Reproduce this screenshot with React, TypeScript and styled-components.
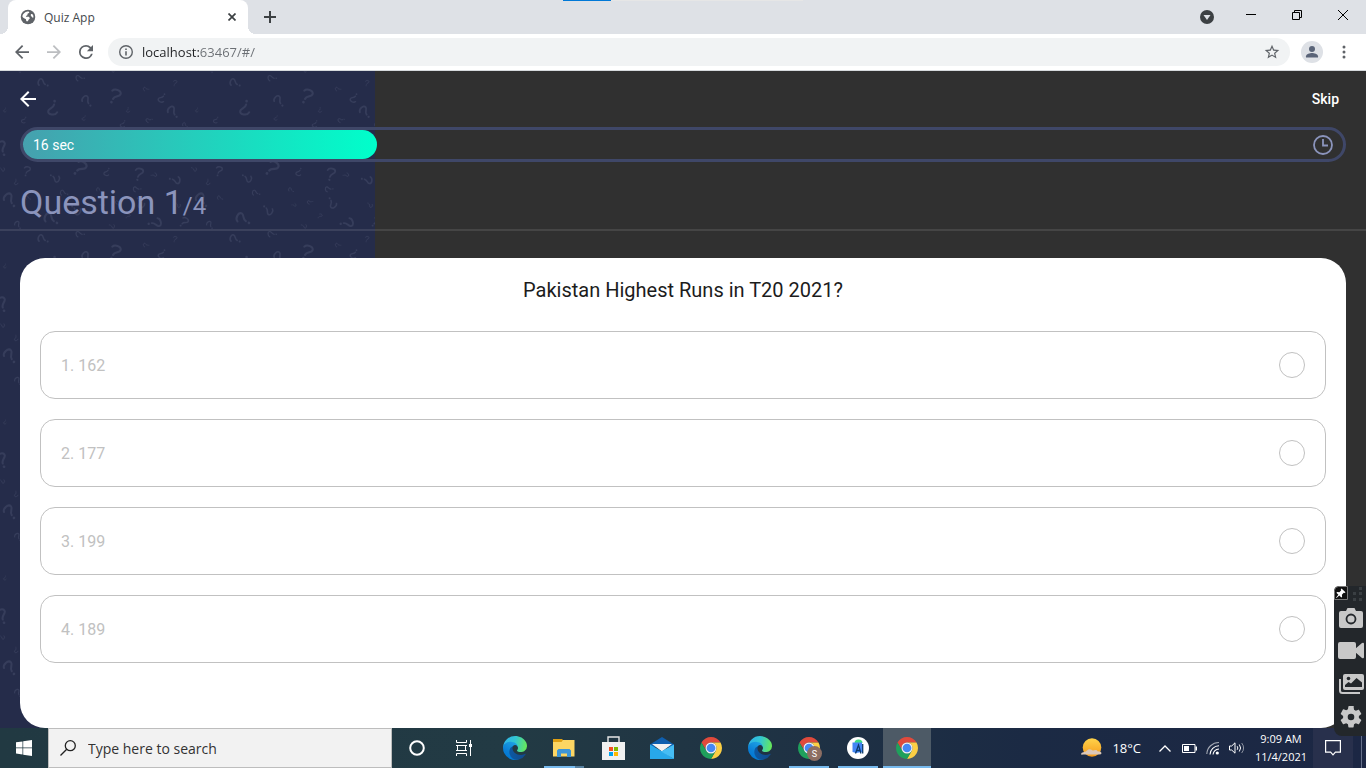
import React, { useState } from 'react';
import styled, { createGlobalStyle } from 'styled-components';

const UI = '"Open Sans", "Noto Sans", sans-serif';
const APP = 'Roboto, "Liberation Sans", sans-serif';

const GlobalStyle = createGlobalStyle`
  *, *::before, *::after { box-sizing: border-box; }
  body { margin: 0; font-family: ${APP}; overflow: hidden; }
  button, input { font: inherit; color: inherit; border: 0; padding: 0; margin: 0; background: none; outline: none; }
  svg { display: block; flex: none; }
`;

const Desktop = styled.div`
  position: relative;
  display: flex;
  flex-direction: column;
  width: 100%;
  min-height: 100vh;
`;

/* ---------- browser window ---------- */

const TitleBar = styled.header`
  position: relative;
  display: flex;
  align-items: stretch;
  height: 34px;
  padding-left: 8px;
  background: #dee1e6;
  font-family: ${UI};
`;

const LoadStrip = styled.div`
  position: absolute;
  top: 0;
  left: calc(50% - 120px);
  width: 240px;
  height: 1px;
  background: linear-gradient(90deg, #0078d7 48px, #e6e6e6 48px);
`;

const Tab = styled.div`
  position: relative;
  display: flex;
  align-items: center;
  width: 240px;
  padding: 0 10px 0 12px;
  gap: 8px;
  border-radius: 8px 8px 0 0;
  background: #fff;
  color: #45494d;
  font-size: 12px;

  &::before, &::after {
    content: '';
    position: absolute;
    bottom: 0;
    width: 8px;
    height: 8px;
  }
  &::before { left: -8px; background: radial-gradient(circle at 0 0, #dee1e6 8px, #fff 8px); }
  &::after { right: -8px; background: radial-gradient(circle at 100% 0, #dee1e6 8px, #fff 8px); }
`;

const TabTitle = styled.span`
  flex: 1;
`;

const IconButton = styled.button<{ $w?: number }>`
  display: flex;
  align-items: center;
  justify-content: center;
  width: ${(p) => p.$w ?? 32}px;
  flex: none;
`;

const WindowControls = styled.div`
  display: flex;
  margin-left: auto;
  height: 30px;
`;

const Toolbar = styled.div`
  display: flex;
  align-items: center;
  height: 37px;
  padding: 0 6px;
  background: #fff;
  border-bottom: 1px solid #d5d9dc;
  font-family: ${UI};
`;

const AddressBar = styled.div`
  display: flex;
  align-items: center;
  flex: 1;
  height: 28px;
  margin: 0 6px;
  padding: 0 2px 0 10px;
  gap: 8px;
  border-radius: 14px;
  background: #f1f3f4;
`;

const AddressInput = styled.input`
  flex: 1;
  min-width: 0;
  font-size: 13px;
  background: linear-gradient(90deg, #202124 57px, #6b6f74 57px);
  background-clip: text;
  color: transparent;
`;

const Avatar = styled.span`
  display: flex;
  width: 22px;
  height: 22px;
  border-radius: 50%;
  background: #dee1e6;
  overflow: hidden;
`;

/* ---------- quiz page ---------- */

const QuizPage = styled.main`
  position: relative;
  display: flex;
  flex-direction: column;
  flex: 1;
  background: #303030;
  color: #fff;
`;

const Backdrop = styled.div`
  position: absolute;
  inset: 0 auto 0 0;
  width: 375px;
  background: #252c4a;
  overflow: hidden;
`;

const Content = styled.div`
  position: relative;
  display: flex;
  flex-direction: column;
  flex: 1;
`;

const AppBar = styled.div`
  display: flex;
  align-items: center;
  justify-content: space-between;
  height: 56px;
  padding: 0 27px 0 16px;
`;

const SkipButton = styled.button`
  font-size: 14px;
  font-weight: 500;
`;

const Timer = styled.div`
  display: flex;
  align-items: center;
  justify-content: space-between;
  height: 35px;
  margin: 0 20px;
  padding-right: 10px;
  border: 3px solid #3f4768;
  border-radius: 50px;
`;

const TimerFill = styled.div`
  display: flex;
  align-items: center;
  height: 29px;
  padding-left: 10px;
  border-radius: 50px;
  background: linear-gradient(90deg, #46a0ae, #00ffcb);
  font-size: 14px;
`;

const QuestionCount = styled.h1`
  margin: 20px 20px 7px;
  font-size: 34px;
  font-weight: 400;
  line-height: 40px;
  color: #8b94bc;

  small { font-size: 24px; line-height: 24px; }
`;

const Divider = styled.hr`
  width: 100%;
  height: 2px;
  margin: 0 0 27px;
  border: 0;
  background: rgba(255, 255, 255, 0.1);
`;

const Card = styled.form`
  display: flex;
  flex-direction: column;
  flex: 1;
  gap: 20px;
  margin: 0 20px;
  padding: 20px;
  border-radius: 25px;
  background: #fff;
`;

const QuestionText = styled.h2`
  margin: 0 0 9px;
  text-align: center;
  font-size: 20px;
  font-weight: 400;
  line-height: 24px;
  color: #1c1c1c;
`;

const Option = styled.label`
  display: flex;
  align-items: center;
  justify-content: space-between;
  height: 68px;
  padding: 0 20px;
  border: 1px solid #c1c1c1;
  border-radius: 15px;
  font-size: 16px;
  color: #c1c1c1;
`;

const Radio = styled.input`
  appearance: none;
  width: 26px;
  height: 26px;
  border: 1px solid #c1c1c1;
  border-radius: 50%;
  &:checked { background: #6ac259; }
`;

/* ---------- task bar ---------- */

const TaskBar = styled.footer`
  display: flex;
  height: 40px;
  background: linear-gradient(90deg, #213942 0%, #223a44 38%, #1e3044 62%, #1b2a44 75%, #1c2744 100%);
  color: #fff;
  font-family: ${UI};
`;

const SearchBox = styled.label`
  display: flex;
  align-items: center;
  width: 344px;
  padding-left: 11px;
  gap: 12px;
  border: 1px solid #bdbdbd;
  background: #f2f2f2;
`;

const SearchInput = styled.input`
  flex: 1;
  min-width: 0;
  font-size: 14px;
  color: #333;
  &::placeholder { color: #333; opacity: 1; }
`;

const Apps = styled.nav`
  display: flex;
  gap: 1px;
  padding-left: 1px;
`;

const AppButton = styled.button<{ $state?: 'open' | 'stacked' | 'active' }>`
  position: relative;
  display: flex;
  align-items: center;
  justify-content: center;
  width: 48px;
  background: ${(p) => (p.$state === 'active' ? '#4d5a66' : 'none')};

  &::after {
    content: '';
    display: ${(p) => (p.$state ? 'block' : 'none')};
    position: absolute;
    bottom: 0;
    left: ${(p) => (p.$state === 'active' ? 0 : 4)}px;
    right: ${(p) => (p.$state === 'active' ? 0 : 4)}px;
    height: 2px;
    background: ${(p) => (p.$state === 'stacked' ? 'linear-gradient(90deg, #76b9ed 31px, #56809f 31px)' : '#76b9ed')};
  }
`;

const Tray = styled.div`
  display: flex;
  align-items: center;
  margin-left: auto;
`;

const Weather = styled.button`
  display: flex;
  align-items: center;
  gap: 10px;
  margin-right: 12px;
  font-size: 13px;
`;

const Clock = styled.time`
  width: 64px;
  text-align: center;
  font-size: 11px;
  line-height: 18px;
`;

const Notifications = styled.button`
  display: flex;
  align-items: center;
  justify-content: center;
  align-self: stretch;
  width: 40px;
  margin-right: 8px;
  background: #28304c;
`;

const ShowDesktop = styled.button`
  align-self: stretch;
  width: 5px;
  border-left: 1px solid #66708a;
`;

/* ---------- floating capture tools ---------- */

const CaptureBar = styled.aside`
  position: absolute;
  right: 0;
  bottom: 32px;
  display: flex;
  flex-direction: column;
  width: 32px;
  height: 150px;
  border-radius: 6px 0 0 8px;
  background: #23272b;
`;

const PinRow = styled.div`
  display: flex;
  align-items: flex-start;
  gap: 5px;
  height: 15px;
`;

const ToolButton = styled.button`
  display: flex;
  align-items: center;
  justify-content: center;
  height: 33px;
  padding-left: 2px;
`;

/* ---------- drawings ---------- */

const TILE_W = 192;
const TILE_H = 156;

// x, y, scale, rotation of every question mark in one tile
const MARKS: number[][] = [
  [43, 12, 0.75, -70], [80, 7, 0.6, -95], [175, 12, 0.4, 10], [146, 18, 0.4, -95],
  [115, 25, 1.0, 22], [87, 30, 0.8, -45], [162, 27, 0.65, 205], [53, 37, 1.0, 185],
  [5, 39, 0.3, 190], [128, 39, 0.35, 175], [173, 41, 0.85, -45], [84, 47, 0.35, 200],
  [24, 49, 0.45, 205], [149, 49, 0.45, 250], [123, 53, 0.5, 200], [185, 54, 0.4, -60],
  [2, 77, 1.0, -25], [2, 98, 0.4, 110], [27, 100, 0.65, 10], [16, 111, 0.4, 170],
  [55, 107, 0.7, 115], [80, 97, 1.05, 35], [107, 101, 0.55, 200], [139, 103, 0.85, 8],
  [154, 104, 0.4, 75], [175, 109, 0.75, 95], [64, 122, 0.55, -80], [99, 119, 0.4, -65],
  [137, 118, 0.55, -100], [10, 129, 1.0, -42], [28, 127, 0.4, -75], [76, 139, 0.75, 125],
  [102, 134, 0.3, 85], [118, 131, 0.4, -110], [140, 132, 0.75, 145], [178, 134, 0.4, 125],
  [128, 145, 0.35, 40], [51, 148, 1.0, -65], [18, 154, 0.55, -40], [112, 155, 0.4, 105],
  [155, 152, 0.9, 75], [184, 151, 0.7, 35],
];

const WRAPS = [-1, 0, 1].flatMap((cx) => [-1, 0, 1].map((cy) => [cx, cy]));

const MarkPattern = () => (
  <svg width="100%" height="100%" aria-hidden="true">
    <defs>
      <g id="mark">
        <path d="M-4.500 -4C-3 -7.500 4.500 -7.500 4.500 -3.500C4.500 -.5 -.5 -.5 -.8 3.500" fill="none" stroke="#363d5b" strokeWidth="2" strokeLinecap="round" />
        <circle cx="-1" cy="7" r="1.300" fill="#363d5b" />
      </g>
      <pattern id="marks" width={TILE_W} height={TILE_H} patternUnits="userSpaceOnUse">
        {WRAPS.map(([cx, cy]) => (
          <g key={`${cx}${cy}`} transform={`translate(${cx * TILE_W} ${cy * TILE_H})`}>
            {MARKS.map(([x, y, s, r], i) => (
              <use key={i} href="#mark" transform={`translate(${x} ${y}) rotate(${r}) scale(${s})`} />
            ))}
          </g>
        ))}
      </pattern>
    </defs>
    <rect width="100%" height="100%" fill="url(#marks)" />
  </svg>
);

const ArrowIcon = ({ color, size = 16, flip }: { color: string; size?: number; flip?: boolean }) => (
  <svg width={size} height={size} viewBox="4 4 16 16" fill={color}>
    <path transform={flip ? 'rotate(180 12 12)' : undefined} d="M20 11H7.830l5.590-5.590L12 4l-8 8 8 8 1.410-1.410L7.830 13H20v-2z" />
  </svg>
);

const ChromeIcon = ({ badge }: { badge?: string }) => (
  <svg width="26" height="26" viewBox="0 0 26 26">
    <g transform="translate(2 2) scale(.4583)">
      <path fill="#e04a3c" d="M3.220 12A24 24 0 0 1 44.780 12H24A12 12 0 0 0 13.600 30Z" />
      <path fill="#fccf44" d="M44.780 12A24 24 0 0 1 24 48L34.390 30A12 12 0 0 0 24 12Z" />
      <path fill="#1fa05c" d="M24 48A24 24 0 0 1 3.220 12L13.600 30A12 12 0 0 0 34.390 30Z" />
      <circle cx="24" cy="24" r="12" fill="#f3f3f3" />
      <circle cx="24" cy="24" r="9.500" fill="#4688f4" />
    </g>
    {badge && (
      <>
        <circle cx="18.500" cy="18.500" r="7.500" fill="#8d6e63" />
        <text x="18.500" y="22" fontSize="9" fontFamily={APP} textAnchor="middle" fill="#fff">{badge}</text>
      </>
    )}
  </svg>
);

const EdgeIcon = () => (
  <svg width="24" height="24" viewBox="0 0 256 256">
    <defs>
      <linearGradient id="edgeA" x1="60" y1="177" x2="240" y2="177" gradientUnits="userSpaceOnUse">
        <stop offset="0" stopColor="#0c59a4" /><stop offset="1" stopColor="#114a8b" />
      </linearGradient>
      <linearGradient id="edgeB" x1="130" y1="90" x2="40" y2="235" gradientUnits="userSpaceOnUse">
        <stop offset="0" stopColor="#1b9de2" /><stop offset=".6" stopColor="#0b7fd6" /><stop offset="1" stopColor="#0078d4" />
      </linearGradient>
      <linearGradient id="edgeC" x1="20" y1="60" x2="250" y2="110" gradientUnits="userSpaceOnUse">
        <stop offset="0" stopColor="#2fb5e6" /><stop offset=".45" stopColor="#32c6d2" /><stop offset="1" stopColor="#66e85a" />
      </linearGradient>
    </defs>
    <path fill="url(#edgeA)" d="M235.680 190.500a93.730 93.730 0 0 1-10.540 4.710 101.870 101.870 0 0 1-35.900 6.460c-47.320 0-88.540-32.550-88.540-74.320a31.480 31.480 0 0 1 16.430-27.280c-42.800 1.800-53.800 46.400-53.800 72.530 0 73.880 68.090 81.370 82.760 81.370 7.910 0 19.840-2.300 27-4.560l1.310-.44a128.340 128.340 0 0 0 66.600-52.800 4 4 0 0 0-5.320-5.670z" />
    <path fill="url(#edgeB)" d="M105.730 241.420A79.200 79.200 0 0 1 83 220.080a80.720 80.720 0 0 1 29.530-120c3.120-1.470 8.450-4.130 15.540-4a32.350 32.350 0 0 1 25.690 13 31.880 31.880 0 0 1 6.360 18.660c0-.21 24.460-79.600-80-79.600-43.900 0-80 41.660-80 78.210a130.150 130.150 0 0 0 12.110 56 128 128 0 0 0 156.380 67.110 75.550 75.550 0 0 1-62.780-8z" />
    <path fill="url(#edgeC)" d="M152.330 148.860c-.81 1-3.300 2.500-3.300 5.660 0 2.610 1.700 5.120 4.720 7.230 14.380 10 41.490 8.680 41.560 8.680a59.560 59.560 0 0 0 30.270-8.350A61.380 61.380 0 0 0 256 109.180c.26-22.410-8-37.310-11.340-43.910C223.460 23.840 177.720 0 128 0A128 128 0 0 0 0 126.200c.48-36.540 36.800-66.050 80-66.050 3.500 0 23.460.34 42 10.070 16.340 8.580 24.900 18.940 30.850 29.210 6.180 10.670 7.280 24.150 7.280 29.520s-2.740 13.330-7.800 19.910z" />
  </svg>
);

const ANSWERS = ['162', '177', '199', '189'];

export default function App() {
  const [choice, setChoice] = useState<string | null>(null);
  const [url, setUrl] = useState('localhost:63467/#/');
  const elapsed = 16 / 60;

  return (
    <Desktop>
      <GlobalStyle />
      <TitleBar>
        <LoadStrip />
        <Tab>
          <svg width="16" height="16" viewBox="1 1 22 22">
            <circle cx="12" cy="12" r="10" fill="#5f6368" />
            <path fill="#fff" d="M4.200 11C4.800 8 7.500 5 11.500 4.500c1.500 0 2.500.6 2.200 1.600-.3.900-2 .7-2.400 1.800-.2 1 .5 1.500-.8 2-1 .4-1.500.8-1.300 1.700h3.200c1.200 0 1.800 1 2 2 .2 1.100-1.200 1.300-1.700 2.100-.4.800-.4 2.300-1.800 2.300-1.500 0-1.500-1.800-1.700-3C8 14.600 5 13.500 4.200 11zM16.500 8c1-.3 2 .2 2.500 1.200.5 1.100.6 2.600.2 3.800-1.200 0-1.500-1.200-2.400-1.800-1.200-.8-1.500-2.400-.3-3.200z" />
          </svg>
          <TabTitle>Quiz App</TabTitle>
          <IconButton $w={12} aria-label="Close tab">
            <svg width="8" height="8" viewBox="0 0 8 8" stroke="#3c4043" strokeWidth="1.700"><path d="M.5.5l7 7M7.500.5l-7 7" /></svg>
          </IconButton>
        </Tab>
        <IconButton $w={44} aria-label="New tab">
          <svg width="12" height="12" viewBox="0 0 12 12" stroke="#3c4043" strokeWidth="2"><path d="M6 0v12M0 6h12" /></svg>
        </IconButton>
        <WindowControls>
          <IconButton $w={42} aria-label="Search tabs">
            <svg width="14" height="26" viewBox="0 -8 14 26"><circle cx="7" cy="7" r="7" fill="#3c4043" /><path d="M3.500 5h7L7 10z" fill="#dee1e6" /></svg>
          </IconButton>
          <IconButton $w={46} aria-label="Minimize">
            <svg width="10" height="10" viewBox="0 0 10 10" stroke="#000"><path d="M0 4.500h10" /></svg>
          </IconButton>
          <IconButton $w={46} aria-label="Restore">
            <svg width="10" height="10" viewBox="0 0 10 10" fill="none" stroke="#000"><path d="M.5 2.500h7v7h-7zM2.500 2.500v-2h7v7h-2" /></svg>
          </IconButton>
          <IconButton $w={46} aria-label="Close">
            <svg width="10" height="10" viewBox="0 0 10 10" stroke="#000"><path d="M0 0l10 10M10 0L0 10" /></svg>
          </IconButton>
        </WindowControls>
      </TitleBar>

      <Toolbar>
        <IconButton aria-label="Back"><ArrowIcon color="#5f6368" size={14} /></IconButton>
        <IconButton aria-label="Forward"><ArrowIcon color="#bcbec1" size={14} flip /></IconButton>
        <IconButton aria-label="Reload">
          <svg width="14" height="14" viewBox="4 4 16 16" fill="#5f6368"><path d="M17.650 6.350A7.958 7.958 0 0 0 12 4a8 8 0 1 0 7.730 10h-2.080A6 6 0 1 1 12 6c1.660 0 3.140.69 4.220 1.780L13 11h7V4l-2.350 2.350z" /></svg>
        </IconButton>
        <AddressBar>
          <svg width="16" height="16" viewBox="0 0 16 16" fill="#5f6368"><path d="M8 1a7 7 0 1 0 0 14A7 7 0 0 0 8 1zm0 12.600A5.600 5.600 0 1 1 8 2.400a5.600 5.600 0 0 1 0 11.200zM7.200 7.300h1.600v4.200H7.200zM7.200 4.500h1.600V6H7.200z" /></svg>
          <AddressInput aria-label="Address" value={url} onChange={(e) => setUrl(e.target.value)} />
          <IconButton aria-label="Bookmark">
            <svg width="16" height="16" viewBox="1 1 22 22" fill="#5f6368"><path d="M22 9.240l-7.190-.62L12 2 9.190 8.630 2 9.240l5.460 4.730L5.820 21 12 17.270 18.180 21l-1.630-7.030L22 9.240zM12 15.400l-3.760 2.270 1-4.280-3.320-2.880 4.380-.38L12 6.100l1.710 4.040 4.380.38-3.320 2.880 1 4.280L12 15.400z" /></svg>
          </IconButton>
        </AddressBar>
        <IconButton aria-label="Profile">
          <Avatar><svg width="22" height="22" viewBox="0 0 22 22" fill="#5a6478"><circle cx="11" cy="8" r="3" /><path d="M5 16.500v-1.300C5 13 9 12 11 12s6 1 6 3.200v1.300z" /></svg></Avatar>
        </IconButton>
        <IconButton aria-label="Menu">
          <svg width="4" height="14" viewBox="0 0 4 14" fill="#5f6368"><circle cx="2" cy="2" r="1.500" /><circle cx="2" cy="7" r="1.500" /><circle cx="2" cy="12" r="1.500" /></svg>
        </IconButton>
      </Toolbar>

      <QuizPage>
        <Backdrop><MarkPattern /></Backdrop>
        <Content>
          <AppBar>
            <IconButton $w={24} aria-label="Go back"><ArrowIcon color="#fff" /></IconButton>
            <SkipButton>Skip</SkipButton>
          </AppBar>
          <Timer>
            <TimerFill style={{ width: `calc((100% + 10px) * ${elapsed} + 2px)` }}>16 sec</TimerFill>
            <svg width="20" height="20" viewBox="0 0 20 20" fill="none" stroke="#8b94bc"><circle cx="10" cy="10" r="9" strokeWidth="1.800" /><path d="M10 4v6.500h5" strokeWidth="1.800" /></svg>
          </Timer>
          <QuestionCount>Question 1<small>/4</small></QuestionCount>
          <Divider />
          <Card>
            <QuestionText>Pakistan Highest Runs in T20 2021?</QuestionText>
            {ANSWERS.map((answer, i) => (
              <Option key={answer}>
                {`${i + 1}. ${answer}`}
                <Radio type="radio" name="answer" value={answer} checked={choice === answer} onChange={() => setChoice(answer)} />
              </Option>
            ))}
          </Card>
        </Content>
      </QuizPage>

      <TaskBar>
        <IconButton $w={48} aria-label="Start">
          <svg width="16" height="16" viewBox="0 0 16 16" fill="#fff"><path d="M0 2.300l6.500-.9v6.100H0zM7.200 1.300L16 0v7.500H7.200zM0 8.300h6.500v6.100L0 13.500zM7.200 8.300H16V16l-8.800-1.300z" /></svg>
        </IconButton>
        <SearchBox>
          <svg width="16" height="16" viewBox="0 0 16 16" fill="none" stroke="#222" strokeWidth="1.300"><circle cx="10.300" cy="5.700" r="5" /><path d="M6.700 9.300L.5 15.500" /></svg>
          <SearchInput aria-label="Search" placeholder="Type here to search" />
        </SearchBox>
        <Apps>
          <AppButton aria-label="Cortana">
            <svg width="16" height="16" viewBox="0 0 16 16"><circle cx="8" cy="8" r="6.800" fill="none" stroke="#fff" strokeWidth="2" /></svg>
          </AppButton>
          <AppButton aria-label="Task view">
            <svg width="20" height="16" viewBox="0 0 20 16" fill="none" stroke="#fff"><path d="M.5 0v2.500h10V0M.5 16v-2.500h10V16M1.500 5.500h8v5h-8zM0 5.500h11M0 10.500h11M14.500 0v4M14.500 7v9" /><path d="M13 4h3v3h-3z" fill="#fff" stroke="none" /></svg>
          </AppButton>
          <AppButton aria-label="Edge"><EdgeIcon /></AppButton>
          <AppButton $state="stacked" aria-label="File Explorer">
            <svg width="22" height="18" viewBox="0 0 22 18">
              <path fill="#fdd663" d="M0 1h21.500v16.500H0z" />
              <path fill="#e0a013" d="M0 0h9l1 1-1.500 2H0z" />
              <path fill="#3e96d6" d="M4 18v-6.500L5.500 10h11l1.500 1.500V18h-4v-3.500H8V18z" />
            </svg>
          </AppButton>
          <AppButton aria-label="Microsoft Store">
            <svg width="24" height="24" viewBox="0 0 24 24">
              <path d="M7 6V1h11v5" fill="none" stroke="#e8e8e8" strokeWidth="1.400" />
              <path fill="#f1f1f1" d="M1 6h23v18H1z" />
              <path fill="#f25022" d="M8 11h4v4H8z" /><path fill="#7fba00" d="M13 11h4v4h-4z" />
              <path fill="#00a4ef" d="M8 16h4v4H8z" /><path fill="#ffb900" d="M13 16h4v4h-4z" />
            </svg>
          </AppButton>
          <AppButton aria-label="Mail">
            <svg width="24" height="22" viewBox="0 0 24 22">
              <path fill="#0f5fae" d="M0 7.500L12 0l12 7.500V10H0z" />
              <path fill="#f2f2f2" d="M2 7h20L12 14.500z" />
              <path fill="#28a8ea" d="M0 7.500L14 15.500 24 22H0z" />
              <path fill="#46bdf4" d="M24 7.500V22L11 14.500z" />
            </svg>
          </AppButton>
          <AppButton aria-label="Chrome"><ChromeIcon /></AppButton>
          <AppButton aria-label="Edge"><EdgeIcon /></AppButton>
          <AppButton $state="open" aria-label="Chrome profile"><ChromeIcon badge="S" /></AppButton>
          <AppButton $state="open" aria-label="Android Studio">
            <svg width="22" height="22" viewBox="0 0 22 22">
              <circle cx="11" cy="11" r="11" fill="#fff" />
              <path fill="#3ddc84" d="M7.500 6a4 3.500 0 0 1 8 0z" />
              <path fill="#4285f4" d="M5.500 5.500h9.500v9.500l-6 1-3.500-1z" />
              <path d="M8.500 16.500L11.500 8l2.500 8.500M9.500 13.500h4M15.700 7v9.500" fill="none" stroke="#0b3a6b" strokeWidth="1.300" />
            </svg>
          </AppButton>
          <AppButton $state="active" aria-label="Chrome window"><ChromeIcon /></AppButton>
        </Apps>
        <Tray>
          <Weather>
            <svg width="21" height="20" viewBox="0 0 21 20">
              <defs><linearGradient id="sun" x2="0" y2="1"><stop stopColor="#ffd34a" /><stop offset="1" stopColor="#f59a1b" /></linearGradient></defs>
              <circle cx="11" cy="9.500" r="9.300" fill="url(#sun)" />
              <path fill="#dcc8b8" d="M0 16q0-1.500 3-2 2-.2 3-1.500 2-2 5-.5 1 1 2 .3 3-1 3.500 1 4 .2 4 2 0 1.200-2.500 1.200H2Q0 17 0 16z" />
            </svg>
            18°C
          </Weather>
          <IconButton $w={24} aria-label="Show hidden icons">
            <svg width="12" height="7" viewBox="0 0 12 7" fill="none" stroke="#fff" strokeWidth="1.300"><path d="M.5 6.500L6 1l5.500 5.500" /></svg>
          </IconButton>
          <IconButton $w={24} aria-label="Battery">
            <svg width="15" height="9" viewBox="0 0 15 9"><path d="M.5.5h12.500v8H.5z" fill="none" stroke="#fff" /><path d="M2 2h5v5H2zM13.500 2.500H15v4h-1.500z" fill="#fff" /></svg>
          </IconButton>
          <IconButton $w={24} aria-label="Wi-Fi">
            <svg width="14" height="14" viewBox="0 0 14 14" fill="none" stroke="#fff" strokeWidth="1.100"><path d="M.8 13A12 12 0 0 1 13 1.500" opacity=".6" /><path d="M4 13.500A9 9 0 0 1 13 4.800M7 13.500A6.500 6.500 0 0 1 13 8" /><circle cx="11.300" cy="12" r="1.600" fill="#fff" stroke="none" /></svg>
          </IconButton>
          <IconButton $w={24} aria-label="Volume">
            <svg width="16" height="12" viewBox="0 0 16 12" fill="none" stroke="#fff"><path d="M.5 4h2.200L6 .8v10.400L2.700 8H.5zM8.200 4.200q1.300 1.800 0 3.600M10.300 2.500q2.600 3.500 0 7" /><path d="M12.700 1q3.800 5 0 10" opacity=".5" /></svg>
          </IconButton>
          <Clock>9:09 AM<br />11/4/2021</Clock>
          <Notifications aria-label="Notifications">
            <svg width="16" height="16" viewBox="0 0 16 16" fill="none" stroke="#fff" strokeWidth="1.200"><path d="M.6.6h14.800v11.500h-5L8 14.800l-2.400-2.700h-5z" /></svg>
          </Notifications>
          <ShowDesktop aria-label="Show desktop" />
        </Tray>
      </TaskBar>

      <CaptureBar>
        <PinRow>
          <IconButton $w={14} aria-label="Pin">
            <svg width="14" height="14" viewBox="0 0 14 14"><path d="M.5 4.500q0-4 4-4h9v13H.5z" fill="#111" stroke="#777" /><path fill="#fff" d="M7.500 2.500l4 3.700-.8.800-1-.2-1.800 1.900.2 2.200-.8.700-2-2L2.500 12l-.4-.4 2.300-2.900-2-2 .8-.7 2.200.2 1.800-1.900-.4-1z" /></svg>
          </IconButton>
          <svg width="10" height="15" viewBox="0 0 10 15" fill="#3a3f43"><path d="M0 6h3v3H0zM6 1h3v3H6zM6 6h3v3H6zM0 12h3v3H0zM6 12h3v3H6z" /></svg>
        </PinRow>
        <ToolButton aria-label="Take screenshot">
          <svg width="24" height="20" viewBox="0 0 24 20"><path fill="#c8c8c8" d="M2 3h5l1.500-3h7L17 3h5q2 0 2 2v13q0 2-2 2H2q-2 0-2-2V5q0-2 2-2z" /><circle cx="12" cy="11" r="4.500" fill="none" stroke="#23272b" strokeWidth="1.800" /></svg>
        </ToolButton>
        <ToolButton aria-label="Record video">
          <svg width="26" height="17" viewBox="0 0 26 17" fill="#c8c8c8"><path d="M2 0h14q2 0 2 2v13q0 2-2 2H2q-2 0-2-2V2q0-2 2-2zM17 7l7-6q2-1 2 1v13q0 2-2 1l-7-6z" /></svg>
        </ToolButton>
        <ToolButton aria-label="Gallery">
          <svg width="25" height="20" viewBox="0 0 25 20"><path d="M1 5v11.500q0 2.500 2.500 2.500H21" fill="none" stroke="#c8c8c8" strokeWidth="2" /><rect x="4" width="21" height="16" rx="2" fill="#c8c8c8" /><circle cx="9.500" cy="4.500" r="1.800" fill="#23272b" /><path d="M6 13v-2l3.500-3 2.500 1.500L17.500 4 23 8.500V13z" fill="#23272b" /></svg>
        </ToolButton>
        <ToolButton aria-label="Settings">
          <svg width="22" height="22" viewBox="2 2 20 20" fill="#c8c8c8"><path d="M19.140 12.940c.04-.3.060-.61.060-.94s-.02-.64-.07-.94l2.030-1.580a.49.49 0 0 0 .12-.61l-1.920-3.320a.49.49 0 0 0-.59-.22l-2.390.96a7 7 0 0 0-1.620-.94l-.36-2.540A.48.480 0 0 0 13.920 2h-3.840a.48.480 0 0 0-.47.410l-.36 2.540c-.59.24-1.130.57-1.620.94l-2.390-.96a.48.480 0 0 0-.59.220L2.740 8.870a.48.480 0 0 0 .12.610l2.030 1.580c-.05.3-.09.630-.09.940s.02.640.07.940l-2.030 1.580a.49.490 0 0 0-.12.610l1.920 3.320c.12.220.37.290.59.220l2.390-.96c.5.380 1.030.7 1.620.94l.36 2.540c.05.240.24.410.48.410h3.840c.24 0 .44-.17.470-.41l.36-2.540a7 7 0 0 0 1.620-.94l2.390.96c.22.080.47 0 .59-.22l1.920-3.320a.48.480 0 0 0-.12-.61zM12 15a3 3 0 1 1 0-6 3 3 0 0 1 0 6z" /></svg>
        </ToolButton>
      </CaptureBar>
    </Desktop>
  );
}
